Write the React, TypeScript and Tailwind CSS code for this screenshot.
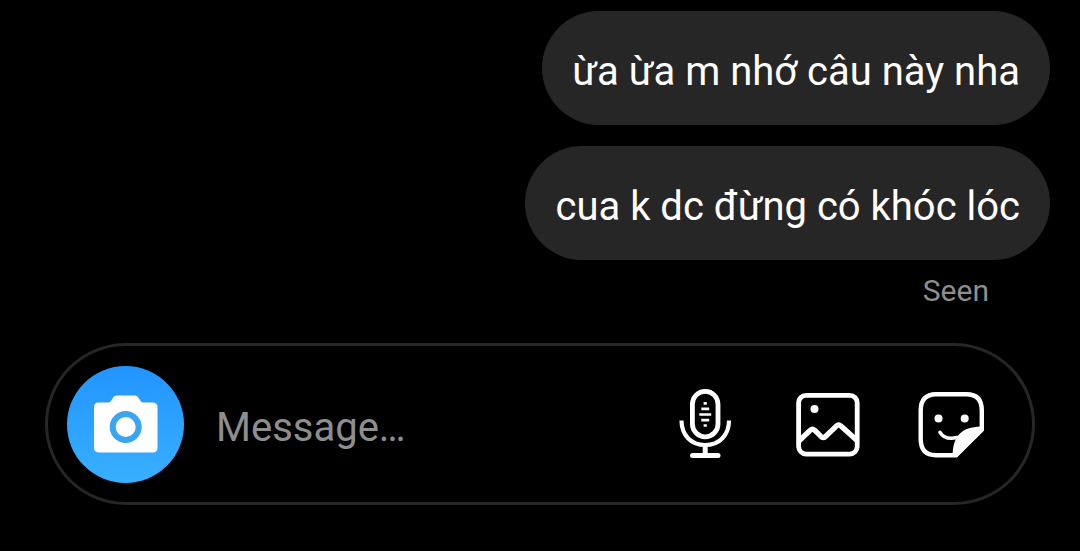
import React, { useState } from "react";

const messages: string[] = ["ừa ừa m nhớ câu này nha", "cua k dc đừng có khóc lóc"];

function CameraIcon() {
  return (
    <svg viewBox="0 0 64 58" className="h-[58px] w-16" aria-hidden="true">
      <path
        fill="#fff"
        d="M4.500 7.500H14Q16 7.500 17 6L19.500 2Q20.500 0.500 22.500 0.500H41Q43 0.500 44 2L46.500 6Q47.500 7.500 49.500 7.500H58.500Q63.500 7.500 63.500 12.500V52.500Q63.500 57.500 58.500 57.500H5Q0 57.500 0 52.500V12.500Q0 7.500 4.500 7.500Z"
      />
      <circle cx="31.7" cy="32" r="13" fill="#fff" stroke="#3aa5f0" strokeWidth="6" />
    </svg>
  );
}

function MicIcon() {
  return (
    <svg viewBox="0 0 80 100" className="h-[100px] w-20" fill="none" stroke="#fff" aria-hidden="true">
      <rect x="27.4" y="16.4" width="25.6" height="45.4" rx="12.8" strokeWidth="4.8" />
      <path d="M16.5 45.5C16.5 60 26 70 40.2 70S64 60 64 45.500" strokeWidth="4.2" />
      <path d="M40.2 70V79" strokeWidth="5" />
      <path d="M27.500 80.500H53" strokeWidth="5" strokeLinecap="round" />
      <path d="M38.6 28.300H41.8M36.300 33.800H44.200M34.300 39.500H46.200M36.300 45.200H44.200M38.600 50.500H41.800" strokeWidth="2.700" />
    </svg>
  );
}

function PhotoIcon() {
  return (
    <svg viewBox="0 0 90 90" className="h-[90px] w-[90px]" fill="none" stroke="#fff" aria-hidden="true">
      <rect x="13.6" y="15.3" width="58.6" height="58.8" rx="7.5" strokeWidth="4.8" />
      <circle cx="29.5" cy="29" r="4" fill="#fff" stroke="none" />
      <path d="M14.5 60.5L24.5 51Q27 48 29.8 50.3L36 56.5Q38 58.8 40.5 56.5L51 46.5Q53.5 43.5 56 46L72 60.5" strokeWidth="5.2" />
    </svg>
  );
}

function StickerIcon() {
  return (
    <svg viewBox="0 0 90 90" className="h-[90px] w-[90px]" fill="none" stroke="#fff" aria-hidden="true">
      <path d="M51 75.2H31Q15.7 75.2 15.7 59V30.5Q15.7 14.3 31 14.3H61.5Q76.8 14.3 76.8 30.5V49.500Z" strokeWidth="4.4" />
      <path d="M79 46.5C60 46.5 47.5 52 47.5 77H52L79 50.5Z" fill="#fff" stroke="none" />
      <path d="M35 52.3C38 57.5 43 59.5 52 57.6" strokeWidth="3.6" strokeLinecap="round" />
      <circle cx="33.5" cy="38.6" r="4" fill="#fff" stroke="none" />
      <circle cx="59.7" cy="38.6" r="4" fill="#fff" stroke="none" />
    </svg>
  );
}

export default function App() {
  const [draft, setDraft] = useState("");

  return (
    <main className="flex min-h-screen flex-col bg-black pt-[11px] font-['Roboto',sans-serif] text-white">
      <section aria-label="Conversation" className="flex flex-col items-end pr-[30px]">
        <ul className="flex flex-col items-end gap-[21px]">
          {messages.map((message) => (
            <li key={message} className="rounded-[57px] bg-[#262626] px-[30px] pt-[37px] pb-[29px] text-[40px] leading-[48px]">
              {message}
            </li>
          ))}
        </ul>
        <p className="mt-3 mr-[61px] text-[30px] leading-[38px] text-[#8e8e8e]">Seen</p>
      </section>

      <form
        onSubmit={(event) => event.preventDefault()}
        className="mt-[33px] mr-[45px] mb-11 ml-[45px] flex h-[162px] items-center rounded-full border-[3px] border-[#262626] pr-[37px] pl-[19px]"
      >
        <button
          type="button"
          aria-label="Camera"
          className="flex h-[117px] w-[117px] shrink-0 items-center justify-center rounded-full bg-linear-to-b from-[#2294ff] to-[#38b0ff]"
        >
          <CameraIcon />
        </button>
        <input
          type="text"
          aria-label="Message"
          placeholder="Message…"
          value={draft}
          onChange={(event) => setDraft(event.target.value)}
          className="mt-1.5 ml-8 h-16 min-w-0 flex-1 bg-transparent text-[40px] text-white outline-none placeholder:text-[#8e8e8e] placeholder:opacity-100"
        />
        <div className="flex shrink-0 items-center pt-0.5">
          <button type="button" aria-label="Voice message" className="mr-10">
            <MicIcon />
          </button>
          <button type="button" aria-label="Photo" className="mr-[30px]">
            <PhotoIcon />
          </button>
          <button type="button" aria-label="Sticker">
            <StickerIcon />
          </button>
        </div>
      </form>
    </main>
  );
}
